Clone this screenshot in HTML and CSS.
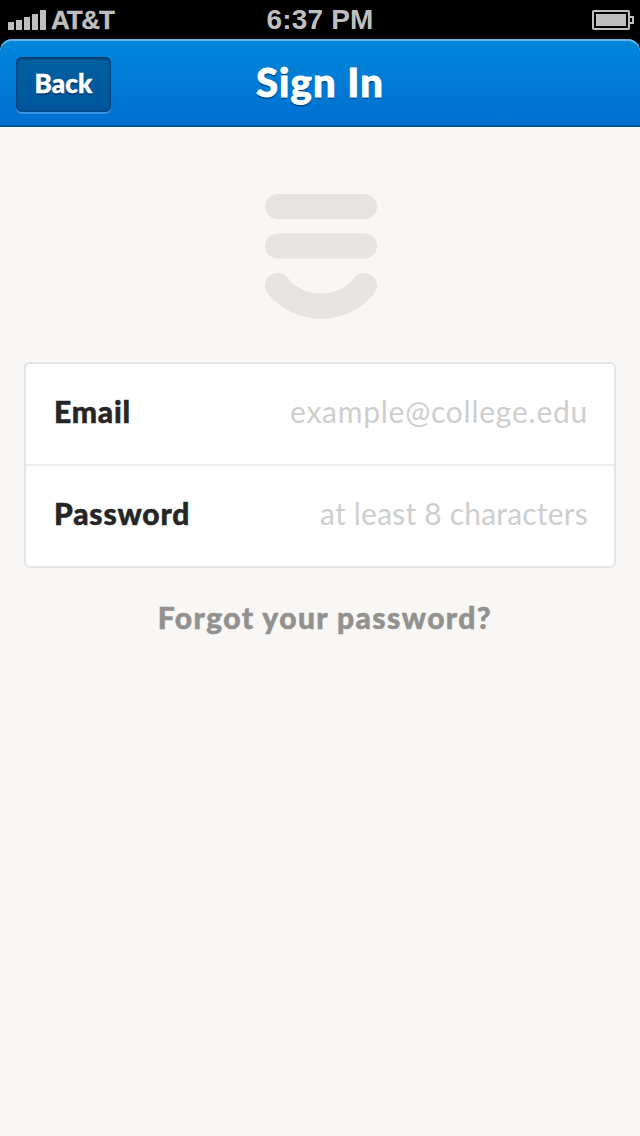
FILE: index.html
```html
<!DOCTYPE html>
<html lang="en">
<head>
<meta charset="utf-8">
<title>Sign In</title>
<link rel="stylesheet" href="styles.css">
</head>
<body>
<div class="status">
  <div class="carrier">
    <svg width="38" height="20" viewBox="0 0 38 20" fill="#bfbfbf"><path d="M0 12h6v8H0zM8 10h6v10H8zM16 7h6v13h-6zM24 4h6v16h-6zM32 0h6v20h-6z"/></svg>
    <span class="network">AT&amp;T</span>
  </div>
  <span class="time">6:37 PM</span>
  <svg class="battery" width="42" height="20" viewBox="0 0 42 20"><rect x="1" y="1" width="36" height="18" rx="1" fill="none" stroke="#bfbfbf" stroke-width="2"/><path d="M4 4h30v12H4z" fill="#bfbfbf"/><path d="M38 7h3v6h-3" fill="none" stroke="#bfbfbf" stroke-width="2"/></svg>
</div>
<header class="navbar">
  <a class="back"><span class="back-label">Back</span></a>
  <h1 class="title">Sign In</h1>
</header>
<main class="content">
  <svg class="logo" width="112" height="126" viewBox="0 0 112 126"><rect width="112" height="25" rx="12.5" fill="#e5e4e2"/><rect y="39.5" width="112" height="25" rx="12.5" fill="#e5e4e2"/><path d="M12.7 91.7A56 56 0 0 0 99.3 91.7" fill="none" stroke="#e5e4e2" stroke-width="25.4" stroke-linecap="round"/></svg>
  <form class="fields">
    <div class="row"><span class="label email">Email</span><span class="hint hint-email">example@college.edu</span></div>
    <div class="row"><span class="label password">Password</span><span class="hint hint-password">at least 8 characters</span></div>
  </form>
  <a class="forgot">Forgot your password?</a>
</main>
</body>
</html>
```
FILE: styles.css
```css
* { box-sizing: border-box; }
body { margin: 0; min-height: 1136px; background: linear-gradient(#000 60px, #f8f7f5 60px); font-family: Lato, sans-serif; white-space: nowrap; }
.status { height: 39px; background: #000; display: grid; grid-template-columns: 1fr auto 1fr; align-items: center; padding: 0 6px 0 8px; color: #bfbfbf; font: bold 27px/39px "Liberation Sans", sans-serif; }
.carrier { display: flex; align-items: center; gap: 5px; }
.network { font-size: 26px; letter-spacing: -1.2px; padding-top: 1px; height: 39px; -webkit-text-stroke: .4px #bfbfbf; }
.time { font-size: 28px; letter-spacing: .2px; height: 39px; margin-right: 2px; }
.battery { justify-self: end; }
.navbar { height: 88px; border-radius: 12px 12px 0 0; background: linear-gradient(#0087da, #006fd0); box-shadow: inset 0 2px #66b5e8, inset 0 -2px #00569c; display: grid; grid-template-columns: 95px 1fr 95px; padding: 18px 16px 0; color: #fff; }
.back { height: 55px; border-radius: 6px; background: linear-gradient(#00609f, #00569c); box-shadow: inset 0 0 3px #003867, inset 0 2px 2px #00406f, 0 2px #3992df; text-align: center; font-weight: 900; font-size: 26px; line-height: 53px; letter-spacing: .2px; text-shadow: 0 2px 1px #003a6e; -webkit-text-stroke: .5px #fff; }
.title { margin: 0; text-align: center; font-weight: 900; font-size: 40px; line-height: 50px; letter-spacing: 1.1px; text-shadow: 0 2px 1px #004a8a; -webkit-text-stroke: .8px #fff; }
.content { background: #f8f7f5; min-height: 1009px; display: flex; flex-direction: column; align-items: center; padding: 67px 24px 0; }
.logo { margin-left: 2px; }
.fields { width: 592px; height: 206px; margin-top: 42px; background: #fff; border: 2px solid #e5e4e4; border-radius: 6px; }
.row { height: 100px; display: flex; justify-content: space-between; align-items: center; padding: 0 26px 6px 28px; font-size: 30px; line-height: 36px; }
.row + .row { height: 102px; border-top: 2px solid #efefef; }
.label { color: #262626; font-weight: 900; -webkit-text-stroke: .5px #262626; }
.email { letter-spacing: .8px; }
.password { letter-spacing: .8px; }
.hint { color: #cecece; font-weight: 400; }
.hint-email { letter-spacing: .75px; }
.hint-password { letter-spacing: .2px; }
.forgot { margin-top: 30px; margin-left: 10px; color: #92918f; font-weight: 900; font-size: 30px; line-height: 38px; letter-spacing: 1.42px; -webkit-text-stroke: .5px #92918f; }
```
